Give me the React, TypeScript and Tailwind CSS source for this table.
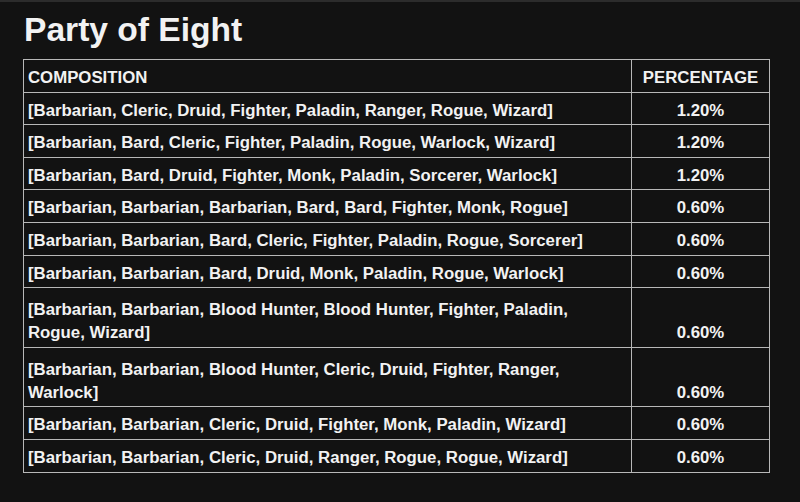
import React from 'react';

const rows = [
  { comp: '[Barbarian, Cleric, Druid, Fighter, Paladin, Ranger, Rogue, Wizard]', pct: '1.20%' },
  { comp: '[Barbarian, Bard, Cleric, Fighter, Paladin, Rogue, Warlock, Wizard]', pct: '1.20%' },
  { comp: '[Barbarian, Bard, Druid, Fighter, Monk, Paladin, Sorcerer, Warlock]', pct: '1.20%' },
  { comp: '[Barbarian, Barbarian, Barbarian, Bard, Bard, Fighter, Monk, Rogue]', pct: '0.60%' },
  { comp: '[Barbarian, Barbarian, Bard, Cleric, Fighter, Paladin, Rogue, Sorcerer]', pct: '0.60%' },
  { comp: '[Barbarian, Barbarian, Bard, Druid, Monk, Paladin, Rogue, Warlock]', pct: '0.60%' },
  { comp: '[Barbarian, Barbarian, Blood Hunter, Blood Hunter, Fighter, Paladin, Rogue, Wizard]', pct: '0.60%', tall: true },
  { comp: '[Barbarian, Barbarian, Blood Hunter, Cleric, Druid, Fighter, Ranger, Warlock]', pct: '0.60%', tall: true },
  { comp: '[Barbarian, Barbarian, Cleric, Druid, Fighter, Monk, Paladin, Wizard]', pct: '0.60%' },
  { comp: '[Barbarian, Barbarian, Cleric, Druid, Ranger, Rogue, Rogue, Wizard]', pct: '0.60%' },
];

const App = () => {
  return (
    <div className="w-[800px] h-[502px] bg-[#121212] border-t-2 border-[#2c2c2c] px-[23px] text-[#f2f2f2] font-['Liberation_Sans',Arial,sans-serif] overflow-hidden">
      <h1 className="mt-[9px] ml-px text-[33.6px] font-bold leading-[38px]">Party of Eight</h1>
      <table className="mt-[10px] w-[746px] border-collapse border border-[#b8b8b8] text-[16.8px] font-bold leading-[23px] table-fixed">
        <colgroup>
          <col className="w-[608px]" />
          <col className="w-[138px]" />
        </colgroup>
        <thead>
          <tr>
            <th className="border border-[#b8b8b8] pl-[4px] pr-[20px] pt-[6px] pb-[2.6px] text-left font-bold">COMPOSITION</th>
            <th className="border border-[#b8b8b8] pt-[6px] pb-[2.6px] text-center font-bold align-bottom">PERCENTAGE</th>
          </tr>
        </thead>
        <tbody>
          {rows.map((r, i) => (
            <tr key={i}>
              <td className={`border border-[#b8b8b8] pl-[4px] pr-[20px] pb-[2.6px] ${r.tall ? 'pt-[10px]' : 'pt-[6px]'}`}>{r.comp}</td>
              <td className="border border-[#b8b8b8] pb-[2.6px] text-center align-bottom">{r.pct}</td>
            </tr>
          ))}
        </tbody>
      </table>
    </div>
  );
};

export default App;
